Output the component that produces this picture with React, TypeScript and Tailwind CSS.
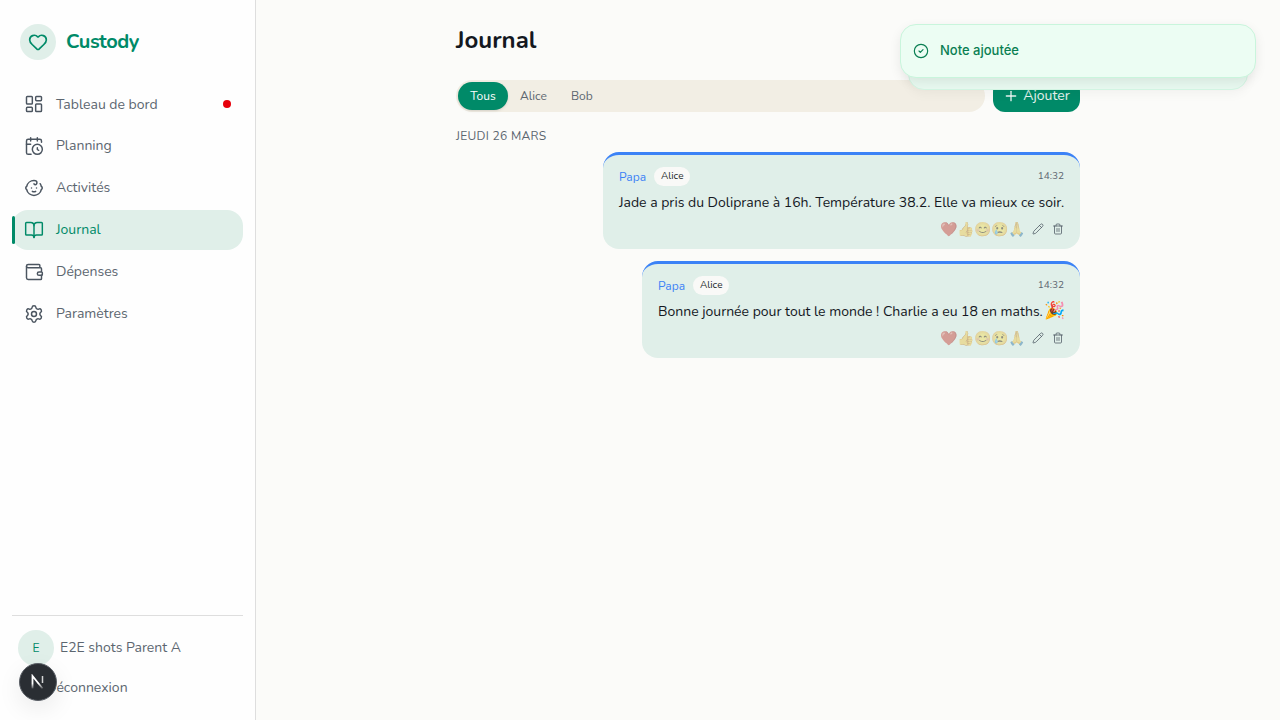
import React from 'react';
import { Heart, LayoutDashboard, CalendarClock, Baby, BookOpen, Wallet, Settings, Plus, Pencil, Trash2, CircleCheck } from 'lucide-react';

const NAV = [
    { label: 'Tableau de bord', icon: LayoutDashboard, dot: true },
    { label: 'Planning', icon: CalendarClock },
    { label: 'Activités', icon: Baby },
    { label: 'Journal', icon: BookOpen, active: true },
    { label: 'Dépenses', icon: Wallet },
    { label: 'Paramètres', icon: Settings },
];

const Note = ({ text, emoji, width }: { text: string; emoji?: string; width: string }) => (
    <div className={`${width} ml-auto bg-[#e0efe9] rounded-2xl border-t-[3px] border-[#3b82f6] px-4 pt-3 pb-3`}>
        <div className="flex items-center justify-between h-[20px]">
            <div className="flex items-center gap-2">
                <span className="text-[12px] text-[#3b82f6]">Papa</span>
                <span className="text-[10px] bg-[#f9f9f7] text-[#1a1f27] rounded-full px-[7px] h-[19px] flex items-center -mt-px">Alice</span>
            </div>
            <span className="text-[10px] text-[#5c6670] -mt-px">14:32</span>
        </div>
        <p className="text-[14px] text-[#14181f] mt-[6px] h-[20px] leading-[20px] whitespace-nowrap">
            {text}
            {emoji && <span className="inline-block align-top h-[20px] ml-[1px] -mt-[1px] text-[17px] leading-[20px]">{emoji}</span>}
        </p>
        <div className="flex items-center justify-end gap-[6px] mt-[8px] h-[16px]">
            <span className="text-[14px] leading-[16px] opacity-50 saturate-[.7] translate-y-px">❤️👍😊😢🙏</span>
            <Pencil size={12} strokeWidth={1.5} className="text-[#4b5560] ml-[1px]" />
            <Trash2 size={12} strokeWidth={1.5} className="text-[#4b5560] ml-[2px]" />
        </div>
    </div>
);

export default function App() {
    return (
        <div className="relative flex h-[720px] overflow-hidden bg-[#fbfbf9] font-['Nunito','Lato',sans-serif]">
            {/* Sidebar */}
            <aside className="w-[256px] shrink-0 bg-[#fefefe] border-r border-[#dedede] flex flex-col px-3 pt-6 pb-[22px]">
                <div className="flex items-center gap-[10px] px-2 h-9">
                    <div className="w-9 h-9 rounded-full bg-[#e0efe9] flex items-center justify-center">
                        <Heart size={20} strokeWidth={2} className="text-[#008a68]" />
                    </div>
                    <span className="text-[20px] font-bold tracking-tight text-[#008a68]">Custody</span>
                </div>
                <nav className="mt-6 flex flex-col gap-[2px]">
                    {NAV.map((item) => {
                        const Icon = item.icon;
                        return (
                            <div
                                key={item.label}
                                className={`relative flex items-center gap-3 h-10 px-3 rounded-2xl text-[14px] ${item.active ? 'bg-[#e0efe9] text-[#008a68]' : 'text-[#5c6670]'}`}
                            >
                                {item.active && <span className="absolute left-0 top-[6px] w-[3px] h-[28px] bg-[#008a68] rounded-full" />}
                                <Icon size={20} strokeWidth={1.75} className={item.active ? 'text-[#008a68]' : 'text-[#4b5560]'} />
                                <span className={item.dot ? '' : 'pb-[2px]'}>{item.label}</span>
                                {item.dot && <span className="ml-auto w-2 h-2 rounded-full bg-[#e7000b]" />}
                            </div>
                        );
                    })}
                </nav>
                <div className="mt-auto border-t border-[#dedede] pt-[14px]">
                    <div className="flex items-center gap-[6px] px-[6px]">
                        <div className="w-9 h-9 rounded-full bg-[#e0efe9] text-[#008a68] flex items-center justify-center text-[12px]">E</div>
                        <span className="text-[14px] text-[#5c6670] pb-[2px]">E2E shots Parent A</span>
                    </div>
                    <div className="text-[14px] text-[#5c6670] pl-[34px] mt-[12px] h-[20px] leading-[20px]">Déconnexion</div>
                </div>
            </aside>

            {/* Main */}
            <main className="flex-1 min-w-0">
                <div className="max-w-[672px] mx-auto px-6 pt-6">
                    <h1 className="text-[24px] font-bold text-[#14181f] leading-[32px]">Journal</h1>
                    <div className="mt-6 flex gap-2 h-8">
                        <div className="flex-1 bg-[#f2eee4] rounded-2xl flex items-center px-[2px] text-[12px] text-[#5c6670]">
                            <span className="bg-[#008a68] text-white rounded-full h-7 w-[50px] justify-center flex items-center shadow-sm">Tous</span>
                            <span className="px-3">Alice</span>
                            <span className="pl-3">Bob</span>
                        </div>
                        <button className="w-[87px] bg-[#008a68] text-white/90 rounded-xl text-[14px] flex items-center justify-center gap-1 pb-[2px]">
                            <Plus size={16} className="mt-[2px]" />
                            Ajouter
                        </button>
                    </div>
                    <div className="mt-4 text-[12px] text-[#5c6670] tracking-[0.3px] leading-4">JEUDI 26 MARS</div>
                    <div className="mt-2 flex flex-col gap-3">
                        <Note width="w-[477px]" text="Jade a pris du Doliprane à 16h. Température 38.2. Elle va mieux ce soir." />
                        <Note width="w-[438px]" text="Bonne journée pour tout le monde ! Charlie a eu 18 en maths." emoji="🎉" />
                    </div>
                </div>
            </main>

            {/* Toast stack */}
            <div className="absolute left-[908px] top-[50px] w-[340px] h-[40px] rounded-2xl bg-[#e8f9f0] border border-[#d3f5e3] shadow-[0_4px_12px_rgba(0,0,0,0.04)]" />
            <div className="absolute left-[900px] top-[24px] w-[356px] h-[54px] rounded-2xl bg-[#ecfdf3] border border-[#c9f5dc] shadow-[0_4px_12px_rgba(0,0,0,0.08)] flex items-center gap-[11px] px-[12px] font-['Inter',sans-serif] text-[13px] font-medium text-[#0a7f52]">
                <CircleCheck size={16} strokeWidth={1.75} />
                Note ajoutée
            </div>

            {/* Dev indicator */}
            <div className="absolute left-[19px] top-[663px] w-[38px] h-[38px] rounded-full bg-[#2a2e33] border border-[#5a5f66] shadow-[0_8px_24px_rgba(0,0,0,0.08)] flex items-center justify-center">
                <svg viewBox="0 0 16 16" className="w-[16px] h-[16px]">
                    <defs>
                        <linearGradient id="nfade" x1="0" y1="0" x2="0" y2="1">
                            <stop offset="0.6" stopColor="#fff" />
                            <stop offset="1" stopColor="#fff" stopOpacity="0.2" />
                        </linearGradient>
                    </defs>
                    <path d="M2.500 14.500V2l10 12.500" stroke="url(#nfade)" strokeWidth="1.800" fill="none" />
                    <path d="M12.500 2v7" stroke="#fff" strokeOpacity="0.8" strokeWidth="1.500" fill="none" />
                </svg>
            </div>
        </div>
    );
}
